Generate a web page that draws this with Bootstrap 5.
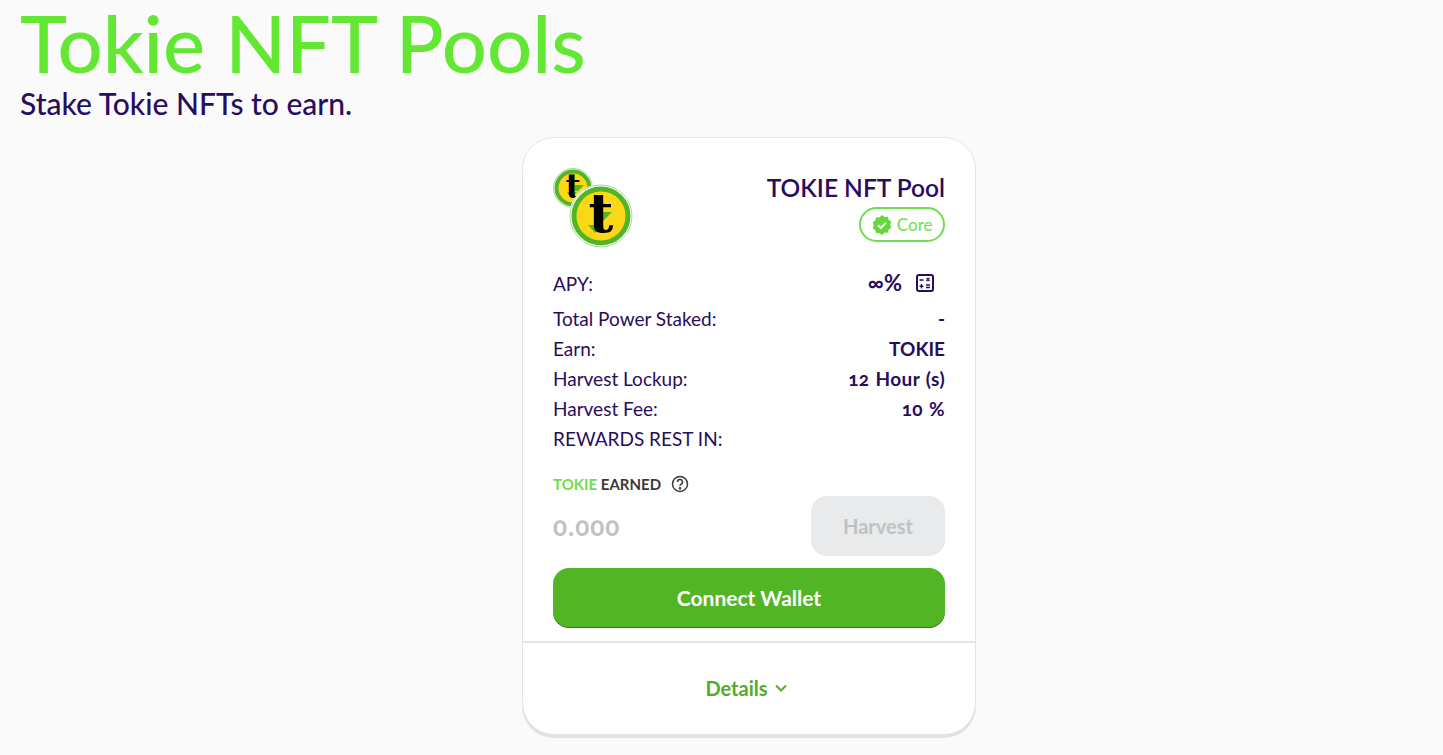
<!DOCTYPE html>
<html lang="en">
<head>
    <meta charset="UTF-8">
    <meta name="viewport" content="width=device-width, initial-scale=1.0">
    <title>Tokie NFT Pools</title>
    <link href="https://cdn.jsdelivr.net/npm/bootstrap@5.3.0/dist/css/bootstrap.min.css" rel="stylesheet">
    <style>
        body { background: #fafafa; font-family: "Lato", "Open Sans", sans-serif; color: #280d5f; height: 755px; overflow: hidden; font-variant-numeric: oldstyle-nums; }
        .page-head { padding: 0 20px; height: 137px; }
        .page-title { font-size: 79.5px; line-height: 85px; font-weight: 500; color: #62e833; margin: 0; }
        .page-sub { font-size: 30px; line-height: 36px; font-weight: 500; color: #280d5f; margin: 0; }
        .pool-wrap { padding-left: 522px; }
        .pool-card { width: 454px; height: 598px; background: #fff; border: 1px solid #e7e3eb; border-radius: 32px; box-shadow: 0 3px 0 #e2e0e8; }
        .pool-main { padding: 30px 30px 0; height: 503px; }
        .pool-top { height: 86px; }
        .pool-name { font-size: 24.5px; line-height: 30px; font-weight: 600; margin-top: 5px; }
        .core-tag { height: 35px; border: 2px solid #70dc4f; border-radius: 18px; color: #70dc4f; font-size: 17px; padding: 0 10.500px; gap: 5px; margin-top: 4px; }
        .stat-row { height: 30px; font-size: 19px; line-height: 30px; }
        .stat-row b { font-weight: 700; }
        .stat-num { letter-spacing: .4px; word-spacing: 1px; }
        .apy-row { height: 39px; margin-top: 11px; line-height: 38px; }
        .apy-row > span { height: 36px; }
        .apy-val { font-size: 22px; }
        .apy-icon { margin-left: 13px; margin-right: 10px; }
        .earned-label { font-size: 15px; font-weight: 700; color: #3a3a3a; height: 20px; line-height: 20px; margin-top: 20px; gap: 10px; }
        .earned-label span { color: #70dc4f; }
        .earned-row { height: 60px; margin-top: 2px; }
        .earned-val { font-size: 26px; font-weight: 700; color: #bdc2c4; letter-spacing: 1px; }
        .harvest-btn { width: 134px; height: 60px; border: 0; border-radius: 16px; background: #e9eaeb; color: #bdc2c4; font-size: 20px; font-weight: 700; }
        .connect-btn { width: 100%; height: 60px; margin-top: 12px; border: 0; border-radius: 16px; background: #52b526; color: #fff; font-size: 21px; font-weight: 700; box-shadow: inset 0 -1px 0 rgba(14,14,44,.4); }
        .pool-foot { height: 93px; border-top: 2px solid #e7e3eb; color: #52ad2e; font-size: 20px; font-weight: 700; gap: 6px; padding: 0 5px 2px 0; }
    </style>
</head>
<body>
    <header class="page-head">
        <h1 class="page-title">Tokie NFT Pools</h1>
        <h2 class="page-sub">Stake Tokie NFTs to earn.</h2>
    </header>

    <main class="pool-wrap">
        <div class="pool-card">
            <div class="pool-main">
                <div class="pool-top d-flex justify-content-between">
                    <svg width="80" height="80" viewBox="0 0 80 80">
                        <circle cx="20" cy="20" r="19.500" fill="#fff" stroke="#a8d89a" stroke-width="1"/>
                        <circle cx="20" cy="20" r="16.500" fill="#fdd816" stroke="#52b526" stroke-width="4"/>
                        <path d="M22 17h9l-6 6h-4zM14 24h10l-6 6z" fill="#52b526"/>
                        <text x="20" y="30" text-anchor="middle" font-family="DejaVu Serif" font-weight="700" font-size="33" fill="#000">t</text>
                        <circle cx="48" cy="48" r="32" fill="#fff"/>
                        <circle cx="48" cy="48" r="31" fill="#fff" stroke="#a8d89a" stroke-width="1"/>
                        <circle cx="48" cy="48" r="27" fill="#fdd816" stroke="#52b526" stroke-width="5"/>
                        <path d="M50 44h9L46 57h-5zM35 57h16l-9 8z" fill="#52b526"/>
                        <text x="48" y="64" text-anchor="middle" font-family="DejaVu Serif" font-weight="700" font-size="54" fill="#000">t</text>
                    </svg>
                    <div class="d-flex flex-column align-items-end">
                        <div class="pool-name">TOKIE NFT Pool</div>
                        <div class="core-tag d-inline-flex align-items-center">
                            <svg width="20" height="20" viewBox="0 0 20 20">
                                <path d="M10 0l2.600 1.900 3.200-.2.900 3.100 2.600 1.900-1.100 3 1.100 3-2.600 1.900-.9 3.100-3.200-.2L10 20l-2.600-1.900-3.200.2-.9-3.100L.7 13.300l1.100-3-1.100-3 2.600-1.900.9-3.100 3.200.2z" fill="#62d83a"/>
                                <path d="M6 10.200l2.800 2.800 5.200-5.400" fill="none" stroke="#fff" stroke-width="2"/>
                            </svg>
                            Core
                        </div>
                    </div>
                </div>

                <div class="stat-row apy-row d-flex justify-content-between">
                    <span>APY:</span>
                    <span class="d-flex align-items-center"><b class="apy-val">∞%</b>
                        <svg class="apy-icon" width="20" height="20" viewBox="0 0 20 20" fill="none" stroke="#280d5f" stroke-width="2">
                            <rect x="2" y="2" width="16" height="16" rx="2"/>
                            <path d="M4.500 7h4M6.500 11v4.500M4.500 13.200h4M11.500 5l3 3M14.500 5l-3 3M11 12h4M11 14.500h4" stroke-width="1.400"/>
                        </svg>
                    </span>
                </div>
                <div class="stat-row d-flex justify-content-between"><span>Total Power Staked:</span><b>-</b></div>
                <div class="stat-row d-flex justify-content-between"><span>Earn:</span><b>TOKIE</b></div>
                <div class="stat-row d-flex justify-content-between"><span>Harvest Lockup:</span><b class="stat-num">12 Hour (s)</b></div>
                <div class="stat-row d-flex justify-content-between"><span>Harvest Fee:</span><b class="stat-num">10 %</b></div>
                <div class="stat-row d-flex justify-content-between"><span>REWARDS REST IN:</span></div>

                <div class="earned-label d-flex align-items-center">
                    <div><span>TOKIE</span> EARNED</div>
                    <svg width="18" height="18" viewBox="0 0 18 18" fill="none" stroke="#3a3a3a" stroke-width="1.500">
                        <circle cx="9" cy="9" r="7.500"/>
                        <path d="M6.500 7a2.500 2.500 0 1 1 3.700 2.200C9.400 9.700 9 10 9 11"/>
                        <circle cx="9" cy="13.300" r=".6" fill="#3a3a3a"/>
                    </svg>
                </div>
                <div class="earned-row d-flex justify-content-between align-items-center">
                    <span class="earned-val">0.000</span>
                    <button class="harvest-btn" disabled>Harvest</button>
                </div>
                <button class="connect-btn">Connect Wallet</button>
            </div>
            <div class="pool-foot d-flex justify-content-center align-items-center">
                Details
                <svg width="14" height="14" viewBox="0 0 14 14" fill="none" stroke="#52ad2e" stroke-width="2"><path d="M2 4.500l5 5 5-5"/></svg>
            </div>
        </div>
    </main>

    <script src="https://cdn.jsdelivr.net/npm/bootstrap@5.3.0/dist/js/bootstrap.bundle.min.js"></script>
</body>
</html>
